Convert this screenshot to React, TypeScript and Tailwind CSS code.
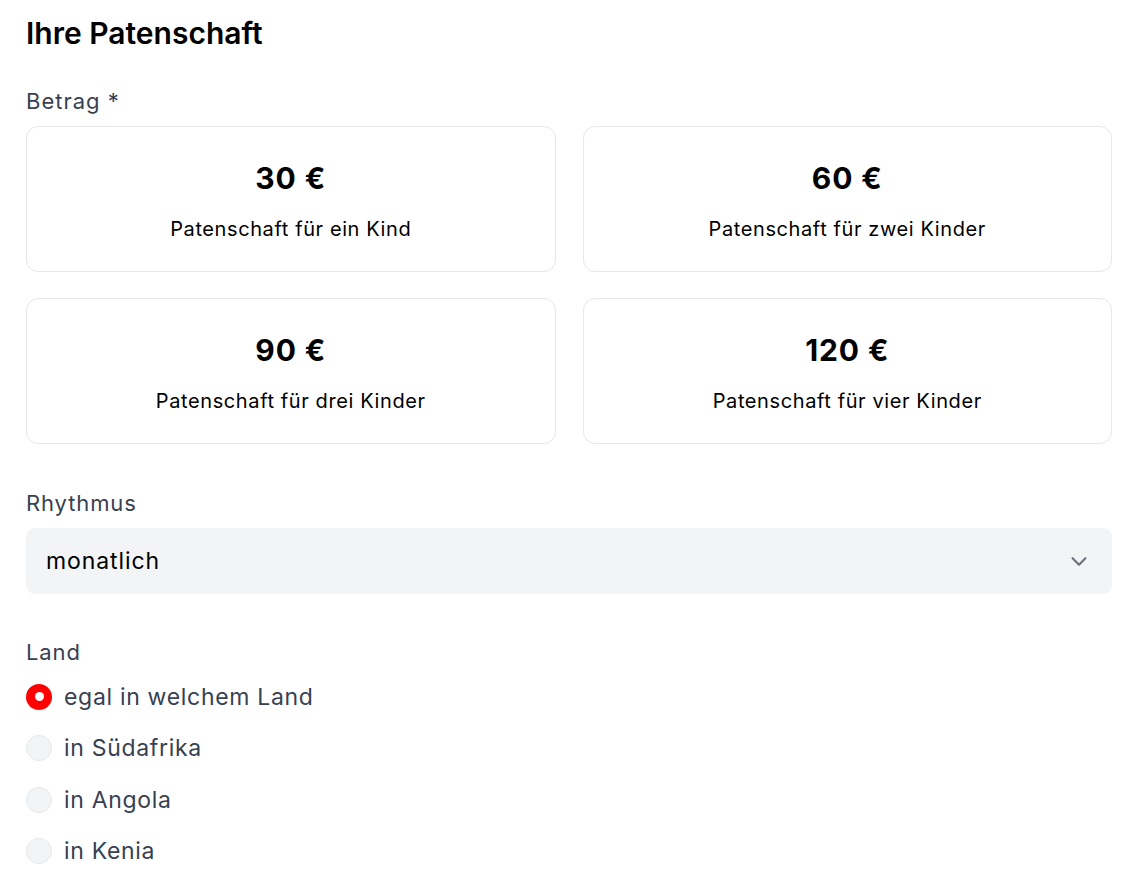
import React, { useState } from "react";

const amounts = [
  { value: "30 €", label: "Patenschaft für ein Kind" },
  { value: "60 €", label: "Patenschaft für zwei Kinder" },
  { value: "90 €", label: "Patenschaft für drei Kinder" },
  { value: "120 €", label: "Patenschaft für vier Kinder" },
];

const countries = [
  "egal in welchem Land",
  "in Südafrika",
  "in Angola",
  "in Kenia",
];

export default function App() {
  const [country, setCountry] = useState(0);

  return (
    <div
      className="min-h-screen bg-white px-[26px] pt-[15px] text-black"
      style={{ fontFamily: "Inter, 'Noto Sans', sans-serif" }}
    >
      <h1 className="text-[30px] leading-[36px] font-semibold">
        Ihre Patenschaft
      </h1>

      <div className="mt-[35px] text-[22px] leading-[30px] tracking-[0.045em] text-[#374151]">
        Betrag *
      </div>
      <div className="mt-[10px] grid grid-cols-2 gap-x-[27px] gap-y-[26px]">
        {amounts.map((a) => (
          <button
            type="button"
            key={a.value}
            className="flex h-[146px] flex-col items-center rounded-[12px] border border-[#e5e7eb] bg-white pt-[33px]"
          >
            <span className="text-[30px] leading-[36px] font-bold tracking-[0.03em]">
              {a.value}
            </span>
            <span className="mt-[19px] text-[20px] leading-[28px] tracking-[0.03em]">
              {a.label}
            </span>
          </button>
        ))}
      </div>

      <div className="mt-[44px] text-[22px] leading-[30px] tracking-[0.04em] text-[#374151]">
        Rhythmus
      </div>
      <div className="mt-[10px] flex h-[66px] items-center justify-between rounded-[9px] bg-[#f3f4f6] pl-[20px] pr-[22px]">
        <span className="text-[23px] tracking-[0.04em]">monatlich</span>
        <svg
          width="22"
          height="22"
          viewBox="0 0 24 24"
          fill="none"
          stroke="#6b7280"
          strokeWidth="2.4"
          strokeLinecap="round"
          strokeLinejoin="round"
        >
          <path d="M5 9l7 7 7-7" />
        </svg>
      </div>

      <div className="mt-[43px] text-[22px] leading-[30px] tracking-[0.04em] text-[#374151]">
        Land
      </div>
      <div className="mt-[4px] flex flex-col">
        {countries.map((c, i) => (
          <label
            key={c}
            className="flex h-[51.5px] cursor-pointer items-center gap-[12px]"
            onClick={() => setCountry(i)}
          >
            {country === i ? (
              <span className="flex h-[26px] w-[26px] items-center justify-center rounded-full bg-[#ff0000]">
                <span className="h-[9px] w-[9px] rounded-full bg-white" />
              </span>
            ) : (
              <span className="h-[26px] w-[26px] rounded-full border border-[#e5e7eb] bg-[#f3f4f6]" />
            )}
            <span className="text-[23px] tracking-[0.03em] text-[#374151]">
              {c}
            </span>
          </label>
        ))}
      </div>
    </div>
  );
}
